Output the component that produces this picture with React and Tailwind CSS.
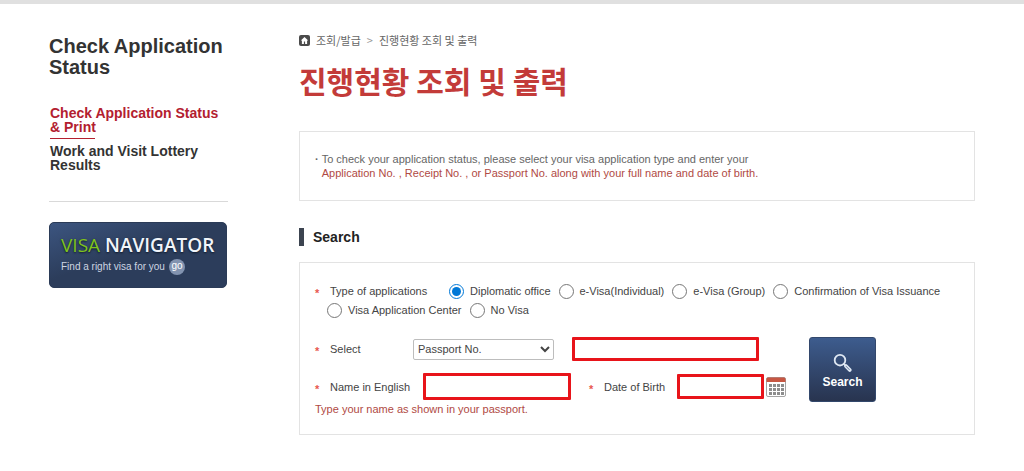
import React, { useState } from 'react';

const MENU = [
  { label: 'Check Application Status & Print', active: true },
  { label: 'Work and Visit Lottery Results', active: false },
];

const TYPE_ROWS = [
  ['Diplomatic office', 'e-Visa(Individual)', 'e-Visa (Group)', 'Confirmation of Visa Issuance'],
  ['Visa Application Center', 'No Visa'],
];

const HomeIcon = () => (
  <svg viewBox="0 0 11 11" className="size-[11px]" aria-hidden="true">
    <rect width="11" height="11" rx="2" fill="#4b4b4b" />
    <path d="M5.5 2 1.8 5.4h1.1V9h2V6.6h1.2V9h2V5.4h1.1z" fill="#fff" />
  </svg>
);

const SearchIcon = () => (
  <svg viewBox="0 0 20 20" className="size-5" fill="none" aria-hidden="true">
    <circle cx="7" cy="7.2" r="5.3" stroke="#dfe8f3" strokeWidth="1.8" />
    <path d="M10.8 11 12.8 13" stroke="#dfe8f3" strokeWidth="1.6" />
    <path d="M12.9 13 16.8 17" stroke="#dfe8f3" strokeWidth="3.8" strokeLinecap="round" />
    <path d="M13.2 13.4 16.3 16.6" stroke="#5b7093" strokeWidth="0.9" strokeLinecap="round" />
  </svg>
);

const CalendarIcon = () => (
  <svg viewBox="0 0 20 20" className="size-5" aria-hidden="true">
    <rect x="0.5" y="0.5" width="19" height="19" rx="1.5" fill="#fff" stroke="#a3a3a3" />
    <path d="M0.5 5V2A1.5 1.5 0 0 1 2 .5h16A1.5 1.5 0 0 1 19.5 2v3z" fill="#c75743" />
    <g fill="#8d8d8d">
      {[7, 11, 15].map((y) =>
        [3, 7, 11, 15].map((x) => <rect key={`${x}-${y}`} x={x} y={y} width="3" height="3" />)
      )}
    </g>
  </svg>
);

const Required = () => (
  <span className="w-[15px] shrink-0 pt-1 leading-3 font-bold text-[#e8574f]" aria-hidden="true">*</span>
);

const Sidebar = () => (
  <aside className="w-[179px] shrink-0">
    <h2 className="pt-8 text-[20px] leading-[21px] font-bold text-[#333]">Check Application Status</h2>
    <nav className="mt-7 flex flex-col gap-[5px] border-b border-[#d9d9d9] px-px pb-[29px] text-[14px] leading-[14px] font-bold">
      {MENU.map((item) => (
        <a key={item.label} href="#" className={item.active ? 'text-[#b3202f]' : 'text-[#333]'}>
          {item.label}
          {item.active && <span className="mt-1 block w-[45px] border-b border-[#b3202f]" />}
        </a>
      ))}
    </nav>
    <a
      href="#"
      className="mt-5 mr-px block rounded-[5px] border border-[#2b3b57] bg-[#2c3d5b] bg-linear-to-br from-[#3c5580] to-[#2c3d5b] to-45% px-[11px] pt-[9px] pb-3 whitespace-nowrap"
    >
      <span className="block font-['Open_Sans',sans-serif] text-[19px] leading-[27px] font-semibold text-[#f1f5fa] [text-shadow:0_1px_2px_#0f1a2c]">
        <span className="font-medium text-[#7fc31c]">VISA</span> NAVIGATOR
      </span>
      <span className="flex items-center gap-1 text-[10px] leading-4 text-[#cdd5e2]">
        Find a right visa for you
        <span className="flex size-4 items-center justify-center rounded-full bg-[#8293b0] pb-0.5 text-white">go</span>
      </span>
    </a>
  </aside>
);

const SearchForm = () => {
  const [type, setType] = useState('Diplomatic office');

  return (
    <form
      className="mt-4 border border-[#e3e3e3] px-[15px] pt-5 pb-[17px] text-[11px] leading-4 text-[#444]"
      onSubmit={(e) => e.preventDefault()}
    >
      <div role="radiogroup" aria-labelledby="type-label" className="flex flex-col gap-[3px]">
        {TYPE_ROWS.map((row, i) => (
          <div key={row[0]} className={i === 0 ? 'flex items-center' : 'flex items-center pl-3'}>
            {i === 0 && (
              <>
                <Required />
                <span id="type-label" className="w-[119px] shrink-0">Type of applications</span>
              </>
            )}
            <div className="flex gap-2 whitespace-nowrap">
              {row.map((name) => (
                <label key={name} className="flex items-center gap-1.5">
                  <input
                    type="radio"
                    name="type"
                    className="size-[15px] accent-[#0078d7]"
                    checked={type === name}
                    onChange={() => setType(name)}
                  />
                  {name}
                </label>
              ))}
            </div>
          </div>
        ))}
      </div>

      <div className="mt-[19px] flex items-start">
        <div className="w-[472px] shrink-0">
          <div className="flex items-center">
            <Required />
            <label htmlFor="kind" className="w-[83px]">Select</label>
            <select id="kind" className="h-[21px] w-[141px] rounded-[2px] border border-[#bdbdbd] bg-white">
              <option>Passport No.</option>
              <option>Application No.</option>
              <option>Receipt No.</option>
            </select>
            <input aria-label="Number" className="ml-[18px] h-6 w-[187px] rounded-[1px] border-3 border-[#e8141a] px-1" />
          </div>
          <div className="mt-3 flex items-center">
            <Required />
            <label htmlFor="name" className="w-[93px]">Name in English</label>
            <input id="name" className="h-[27px] w-[148px] rounded-[1px] border-3 border-[#e8141a] px-1" />
            <span className="ml-[18px] flex"><Required /></span>
            <label htmlFor="birth" className="w-[73px]">Date of Birth</label>
            <input id="birth" className="h-[25px] w-[87px] rounded-[1px] border-3 border-[#e8141a] px-1" />
            <button type="button" className="ml-0.5 shrink-0" aria-label="Open calendar">
              <CalendarIcon />
            </button>
          </div>
          <p className="mt-px text-[#b04a44]">Type your name as shown in your passport.</p>
        </div>
        <button
          type="submit"
          className="ml-[22px] flex h-[65px] w-[67px] shrink-0 flex-col items-center justify-center rounded-[3px] border border-[#33486c] bg-linear-to-b from-[#3d5c8e] to-[#28344f] pt-1 text-[12px] leading-[18px] font-bold text-white"
        >
          <SearchIcon />
          Search
        </button>
      </div>
    </form>
  );
};

const App = () => (
  <div className="min-h-screen border-t-4 border-[#e0e0e0] bg-white font-['Liberation_Sans','Noto_Sans_CJK_KR',sans-serif]">
    <div className="flex gap-[71px] px-[49px]">
      <Sidebar />
      <main className="min-w-0 flex-1 pt-[27px]">
        <div className="flex items-center gap-1.5 font-['Noto_Sans_CJK_KR',sans-serif] text-[11px] leading-[18px] text-[#666]">
          <HomeIcon />
          <a href="#">조회/발급</a>
          <span className="text-[#999]">&gt;</span>
          <span>진행현황 조회 및 출력</span>
        </div>
        <h1 className="mt-[11px] font-['Noto_Sans_CJK_KR',sans-serif] text-[30px] leading-10 font-bold text-[#c33b39]">
          진행현황 조회 및 출력
        </h1>

        <div className="mt-[31px] flex gap-[3px] border border-[#e3e3e3] px-[15px] py-5 text-[11px] leading-[14px] text-[#666]">
          <span className="font-bold">·</span>
          <p>
            To check your application status, please select your visa application type and enter your
            <br />
            <span className="text-[#b04a44]">
              Application No. , Receipt No. , or Passport No. along with your full name and date of birth.
            </span>
          </p>
        </div>

        <h2 className="mt-[27px] flex items-center gap-[9px] text-[14px] leading-[18px] font-bold text-[#222]">
          <span className="h-[18px] w-[5px] bg-[#3c4450]" />
          Search
        </h2>
        <SearchForm />
      </main>
    </div>
  </div>
);

export default App;
